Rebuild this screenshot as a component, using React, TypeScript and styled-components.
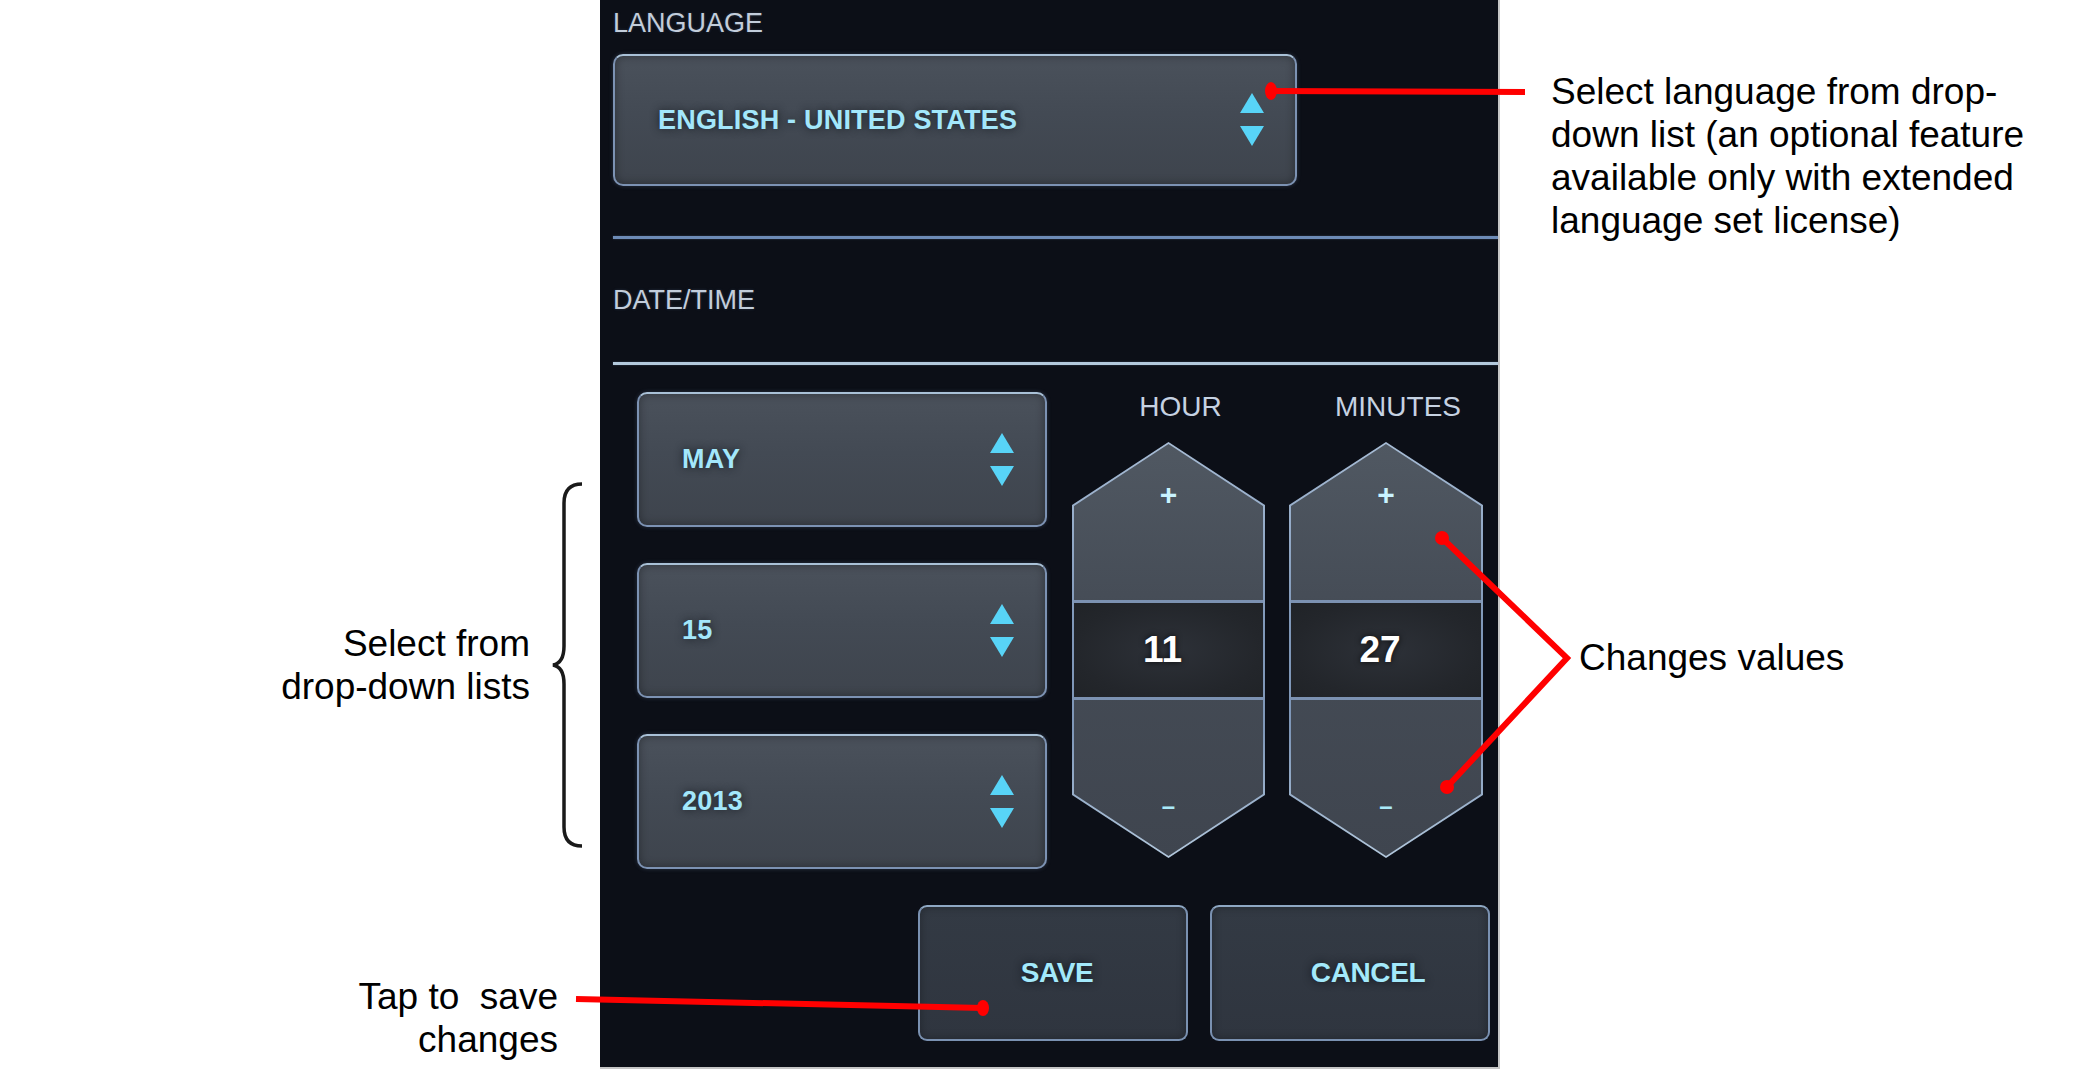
import React from "react";
import styled, { createGlobalStyle } from "styled-components";

const GlobalStyle = createGlobalStyle`
  html, body { margin: 0; padding: 0; background: #ffffff; }
  body { font-family: "Liberation Sans", Arial, sans-serif; }
  * { box-sizing: border-box; }
`;

const Page = styled.div`
  position: relative;
  width: 2100px;
  height: 1069px;
  overflow: hidden;
  background: #ffffff;
`;

const Panel = styled.main`
  margin-left: 600px;
  width: 900px;
  height: 1069px;
  padding-left: 13px;
  background: #0c0f17;
  border-right: 2px solid #c6c6c6;
  border-bottom: 2px solid #c6c6c6;
  display: flex;
  flex-direction: column;
`;

const SectionLabel = styled.div<{ $mt: number }>`
  margin-top: ${(p) => p.$mt}px;
  height: 30px;
  font-size: 27px;
  line-height: 30px;
  color: #c2cddb;
  text-shadow: 0 0 3px rgba(120, 150, 190, 0.25);
`;

const Divider = styled.div<{ $mt: number; $color: string }>`
  margin-top: ${(p) => p.$mt}px;
  height: 3px;
  background: ${(p) => p.$color};
  box-shadow: 0 0 2px rgba(140, 170, 210, 0.35);
`;

const SelectBox = styled.div<{ $w: number; $h: number; $mt?: number }>`
  margin-top: ${(p) => p.$mt ?? 0}px;
  width: ${(p) => p.$w}px;
  height: ${(p) => p.$h}px;
  border: 2px solid #7c92b3;
  border-top-color: #a9c1d7;
  border-radius: 10px;
  background: linear-gradient(180deg, #4a515b 0%, #434a54 45%, #3e444d 100%);
  box-shadow: inset 0 0 10px rgba(0, 0, 0, 0.35), 0 0 4px rgba(130, 160, 200, 0.25);
  display: flex;
  align-items: center;
  justify-content: space-between;
  padding: 0 31px 0 43px;
`;

const SelectText = styled.span`
  font-size: 27px;
  font-weight: 700;
  color: #a3e7fb;
  letter-spacing: 0.2px;
  text-shadow: 0 0 8px rgba(20, 24, 30, 0.9);
`;

const ArrowIcon = () => (
  <svg width="24" height="54" viewBox="0 0 24 54" aria-hidden="true">
    <polygon points="12,0 24,20 0,20" fill="#58d4f7" />
    <polygon points="0,33 24,33 12,53" fill="#58d4f7" />
  </svg>
);

const Select = ({ label, w, h, mt }: { label: string; w: number; h: number; mt?: number }) => (
  <SelectBox $w={w} $h={h} $mt={mt}>
    <SelectText>{label}</SelectText>
    <ArrowIcon />
  </SelectBox>
);

const DateArea = styled.section`
  margin-top: 27px;
  padding-left: 24px;
  display: flex;
  gap: 25px;
`;

const SelectColumn = styled.div`
  display: flex;
  flex-direction: column;
  gap: 36px;
  width: 410px;
`;

const SpinnerGroup = styled.div`
  display: flex;
  gap: 24px;
`;

const SpinnerCol = styled.div<{ $w: number }>`
  width: ${(p) => p.$w}px;
  display: flex;
  flex-direction: column;
  align-items: center;
`;

const SpinnerLabel = styled.div`
  height: 30px;
  font-size: 28px;
  line-height: 30px;
  color: #c6d2e2;
  padding-left: 24px;
  margin-bottom: 20px;
`;

const HexFrame = styled.div`
  width: 100%;
  height: 416px;
  padding: 2px;
  background: linear-gradient(180deg, #a7bcd5 0%, #7f97b8 45%, #7f97b8 70%, #b3c8dd 100%);
  clip-path: polygon(50% 0, 100% 63px, 100% calc(100% - 63px), 50% 100%, 0 calc(100% - 63px), 0 63px);
`;

const HexBody = styled.div`
  height: 100%;
  clip-path: polygon(50% 0, 100% 62px, 100% calc(100% - 62px), 50% 100%, 0 calc(100% - 62px), 0 62px);
  background: linear-gradient(180deg, #505862 0%, #454c56 40%, #3f454f 100%);
  display: flex;
  flex-direction: column;
`;

const HexTop = styled.div`
  height: 156px;
  display: flex;
  justify-content: center;
  padding-top: 36px;
  font-size: 30px;
  font-weight: 700;
  line-height: 30px;
  color: #c9f3ff;
`;

const HexRule = styled.div`
  height: 3px;
  background: #7c92b2;
`;

const HexValue = styled.div`
  height: 94px;
  display: flex;
  align-items: center;
  justify-content: center;
  padding-right: 12px;
  background: radial-gradient(ellipse at center, #2d3138 0%, #23262b 70%, #202327 100%);
  font-size: 37px;
  font-weight: 700;
  color: #ffffff;
  text-shadow: 0 0 6px rgba(0, 0, 0, 0.8);
`;

const HexBottom = styled.div`
  flex: 1;
  display: flex;
  justify-content: center;
  padding-top: 92px;
  font-size: 24px;
  font-weight: 700;
  line-height: 28px;
  color: #a9e9f8;
`;

const Spinner = ({ label, value, w }: { label: string; value: string; w: number }) => (
  <SpinnerCol $w={w}>
    <SpinnerLabel>{label}</SpinnerLabel>
    <HexFrame>
      <HexBody>
        <HexTop>+</HexTop>
        <HexRule />
        <HexValue>{value}</HexValue>
        <HexRule />
        <HexBottom>–</HexBottom>
      </HexBody>
    </HexFrame>
  </SpinnerCol>
);

const ButtonRow = styled.div`
  margin-top: 36px;
  margin-left: 305px;
  display: flex;
  gap: 22px;
`;

const ActionButton = styled.button<{ $w: number; $shift: number }>`
  width: ${(p) => p.$w}px;
  height: 136px;
  border: 2px solid #7a91b1;
  border-top-color: #8fa8c4;
  border-radius: 9px;
  background: linear-gradient(180deg, #333a44 0%, #2f353f 100%);
  box-shadow: inset 0 0 10px rgba(0, 0, 0, 0.3);
  font-family: "Liberation Sans", Arial, sans-serif;
  font-size: 28px;
  font-weight: 700;
  letter-spacing: -0.4px;
  color: #a3e9fb;
  text-shadow: 0 0 8px rgba(15, 18, 24, 0.9);
  padding: 0 0 0 ${(p) => p.$shift}px;
`;

const Callout = styled.div<{ $top: number; $left?: number; $right?: number; $align: "left" | "right" }>`
  position: absolute;
  top: ${(p) => p.$top}px;
  ${(p) => (p.$left !== undefined ? `left: ${p.$left}px;` : "")}
  ${(p) => (p.$right !== undefined ? `right: ${p.$right}px;` : "")}
  text-align: ${(p) => p.$align};
  font-family: "Liberation Sans", Arial, sans-serif;
  font-size: 37px;
  line-height: 43px;
  color: #000000;
  white-space: pre;
`;

const Overlay = styled.svg`
  position: absolute;
  left: 0;
  top: 0;
  pointer-events: none;
`;

export default function App() {
  return (
    <Page>
      <GlobalStyle />
      <Panel>
        <SectionLabel $mt={8}>LANGUAGE</SectionLabel>
        <Select label="ENGLISH - UNITED STATES" w={684} h={132} mt={16} />
        <Divider $mt={50} $color="#6d8bb6" />
        <SectionLabel $mt={46}>DATE/TIME</SectionLabel>
        <Divider $mt={47} $color="#b3c9dc" />
        <DateArea>
          <SelectColumn>
            <Select label="MAY" w={410} h={135} />
            <Select label="15" w={410} h={135} />
            <Select label="2013" w={410} h={135} />
          </SelectColumn>
          <SpinnerGroup>
            <Spinner label="HOUR" value="11" w={193} />
            <Spinner label="MINUTES" value="27" w={194} />
          </SpinnerGroup>
        </DateArea>
        <ButtonRow>
          <ActionButton $w={270} $shift={8}>SAVE</ActionButton>
          <ActionButton $w={280} $shift={36}>CANCEL</ActionButton>
        </ButtonRow>
      </Panel>

      <Callout $top={70} $left={1551} $align="left">
        {"Select language from drop-\ndown list (an optional feature\navailable only with extended\nlanguage set license)"}
      </Callout>
      <Callout $top={636} $left={1579} $align="left">
        Changes values
      </Callout>
      <Callout $top={622} $right={1570} $align="right">
        {"Select from\ndrop-down lists"}
      </Callout>
      <Callout $top={975} $right={1542} $align="right">
        {"Tap to  save\nchanges"}
      </Callout>

      <Overlay width="2100" height="1069" viewBox="0 0 2100 1069">
        <path
          d="M582,484 Q564,484 564,503 L564,646 Q564,663 553,665 Q564,667 564,684 L564,827 Q564,846 582,846"
          fill="none"
          stroke="#1a1a1a"
          strokeWidth="3.5"
        />
        <line x1="1269" y1="91" x2="1525" y2="92" stroke="#ff0000" strokeWidth="6" />
        <ellipse cx="1271" cy="91" rx="6" ry="9" fill="#ff0000" />
        <polyline
          points="1442,538 1567,658 1447,787"
          fill="none"
          stroke="#ff0000"
          strokeWidth="6"
          strokeLinejoin="miter"
        />
        <circle cx="1442" cy="538" r="7" fill="#ff0000" />
        <circle cx="1447" cy="787" r="7" fill="#ff0000" />
        <line x1="576" y1="999" x2="983" y2="1008" stroke="#ff0000" strokeWidth="6" />
        <ellipse cx="983" cy="1008" rx="6" ry="8" fill="#ff0000" />
      </Overlay>
    </Page>
  );
}
